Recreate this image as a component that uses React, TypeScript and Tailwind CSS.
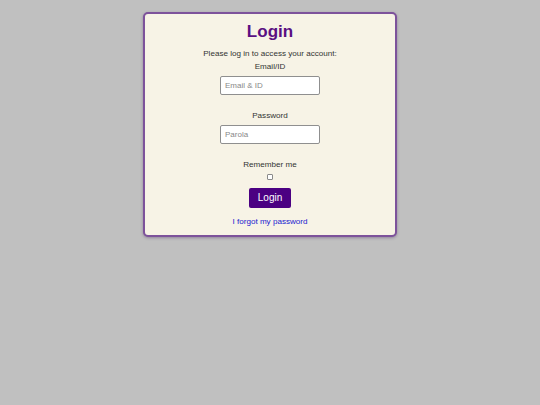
import React from 'react';

export default function App() {
  return (
    <div className="min-h-[405px] w-full bg-[#c0c0c0] pt-3 font-['Liberation_Sans',Arial,sans-serif]">
      <div className="mx-auto flex w-[254px] flex-col items-center rounded-[5px] border-2 border-[#7d529b] bg-[#f7f3e6] pt-[8px] pb-[8px] shadow-[0_1px_3px_rgba(60,20,90,0.35)]">
        <h1 className="h-5 text-[17px] leading-5 font-bold text-[#5a0f82]">Login</h1>
        <p className="mt-[7px] h-[10px] text-[8.1px] leading-[10px] text-[#333]">
          Please log in to access your account:
        </p>
        <label className="mt-[3px] h-[10px] text-[8.1px] leading-[10px] text-[#333]">Email/ID</label>
        <input
          type="text"
          placeholder="Email & ID"
          className="mt-1 h-[19px] w-[100px] rounded-[2px] border border-[#8f8f8f] bg-white px-[4px] text-[8px] text-[#333] placeholder:text-[#888]"
        />
        <label className="mt-4 h-[10px] text-[8.1px] leading-[10px] text-[#333]">Password</label>
        <input
          type="password"
          placeholder="Parola"
          className="mt-1 h-[19px] w-[100px] rounded-[2px] border border-[#8f8f8f] bg-white px-[4px] text-[8px] text-[#333] placeholder:text-[#888]"
        />
        <label className="mt-4 h-[10px] text-[8.1px] leading-[10px] text-[#333]">Remember me</label>
        <input
          type="checkbox"
          className="mt-1 h-[6px] w-[6px] appearance-none rounded-[1px] border border-[#8a8a8a] bg-white"
        />
        <button className="mt-2 h-5 w-[42px] rounded-[2px] bg-[#4b0082] text-[10px] leading-5 text-white">
          Login
        </button>
        <a href="#" className="mt-[9px] h-[10px] text-[8.1px] leading-[10px] text-[#1a1ad0]">
          I forgot my password
        </a>
      </div>
    </div>
  );
}
